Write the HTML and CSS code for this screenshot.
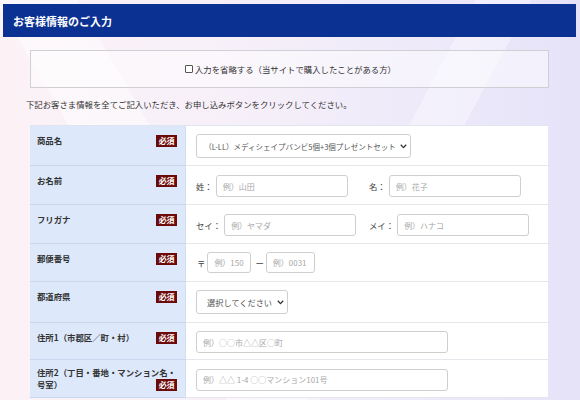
FILE: index.html
```html
<!DOCTYPE html>
<html lang="ja">
<head>
<meta charset="utf-8">
<title>お客様情報のご入力</title>
<link rel="stylesheet" href="styles.css">
</head>
<body>
<div class="page">
  <header class="head"><h1>お客様情報のご入力</h1></header>

  <div class="skip">
    <label class="skip-label"><input type="checkbox" class="check">入力を省略する（当サイトで購入したことがある方）</label>
  </div>

  <p class="intro">下記お客さま情報を全てご記入いただき、お申し込みボタンをクリックしてください。</p>

  <div class="form">
    <div class="row row-sel">
      <div class="th">商品名<span class="req">必須</span></div>
      <div class="td">
        <span class="select-wrap sel-product">
          <select class="select"><option>（L-LL）メディシェイプバンビ5個+3個プレゼントセット</option></select>
          <svg class="chev" width="7" height="5" viewBox="0 0 7 5"><path d="M0.8 0.8 L3.5 3.6 L6.2 0.8" fill="none" stroke="#333" stroke-width="1.3"/></svg>
        </span>
      </div>
    </div>

    <div class="row">
      <div class="th">お名前<span class="req">必須</span></div>
      <div class="td pair">
        <div class="grp"><span class="pre">姓：</span><input class="inp inp-name" placeholder="例）山田"></div>
        <div class="grp"><span class="pre">名：</span><input class="inp inp-name" placeholder="例）花子"></div>
      </div>
    </div>

    <div class="row">
      <div class="th">フリガナ<span class="req">必須</span></div>
      <div class="td pair">
        <div class="grp"><span class="pre">セイ：</span><input class="inp inp-name" placeholder="例）ヤマダ"></div>
        <div class="grp"><span class="pre">メイ：</span><input class="inp inp-name" placeholder="例）ハナコ"></div>
      </div>
    </div>

    <div class="row row-zip">
      <div class="th">郵便番号<span class="req">必須</span></div>
      <div class="td zip">
        <span class="pre">〒</span><input class="inp inp-zip1" placeholder="例）150"><span class="dash">ー</span><input class="inp inp-zip2" placeholder="例）0031">
      </div>
    </div>

    <div class="row row-sel2">
      <div class="th">都道府県<span class="req">必須</span></div>
      <div class="td">
        <span class="select-wrap sel-pref">
          <select class="select"><option>選択してください</option></select>
          <svg class="chev" width="7" height="5" viewBox="0 0 7 5"><path d="M0.8 0.8 L3.5 3.6 L6.2 0.8" fill="none" stroke="#333" stroke-width="1.3"/></svg>
        </span>
      </div>
    </div>

    <div class="row row-addr">
      <div class="th">住所1（市郡区／町・村）<span class="req">必須</span></div>
      <div class="td"><input class="inp inp-addr" placeholder="例）○○市△△区○町"></div>
    </div>

    <div class="row row-addr">
      <div class="th th-wrap">住所2（丁目・番地・マンション名・号室）<span class="req">必須</span></div>
      <div class="td"><input class="inp inp-addr" placeholder="例）△△ 1-4 ○○マンション101号"></div>
    </div>
  </div>
</div>
</body>
</html>
```
FILE: styles.css
```css
* { box-sizing: border-box; }
html, body { margin: 0; padding: 0; }
body {
  width: 580px;
  height: 400px;
  overflow: hidden;
  font-family: "Noto Sans CJK JP", "Noto Sans", sans-serif;
  color: #333;
  background:
    linear-gradient(118deg, transparent 0 60%, rgba(255,255,255,0.35) 60% 67%, transparent 67%),
    linear-gradient(60deg, transparent 0 28%, rgba(255,255,255,0.45) 28% 38%, transparent 38%),
    linear-gradient(90deg, #fcf2f6 0%, #f7f0f9 38%, #eeeafa 72%, #e6e3f9 100%);
}
.page {
  padding: 4px 4px 0 3px;
}
.head {
  height: 33px;
  background: #0b3192;
  display: flex;
  align-items: center;
  padding-left: 10px;
}
.head h1 {
  margin: 0;
  color: #fff;
  font-size: 11px;
  font-weight: 700;
}
.skip {
  margin: 13px 27px 0 27px;
  height: 38px;
  border: 1px solid #cfcfd4;
  background: rgba(255,255,255,0.45);
  display: flex;
  align-items: center;
  justify-content: center;
}
.skip-label {
  font-size: 8.4px;
  color: #333;
  display: flex;
  align-items: center;
  padding-left: 2px;
}
.check {
  appearance: none;
  -webkit-appearance: none;
  width: 8px;
  height: 8px;
  margin: 0 2px 0 0;
  border: 1px solid #555;
  border-radius: 1px;
  background: #fff;
}
.intro {
  margin: 10px 0 0 23px;
  font-size: 8.4px;
  line-height: 12px;
  color: #333;
}
.form {
  margin: 15px 28px 0 27px;
  border-top: 1px solid #dfe6f2;
  background: #fff;
}
.row {
  display: grid;
  grid-template-columns: 156px 1fr;
}
.th {
  background: #dde9fb;
  padding: 8px 6px 6px 7px;
  font-size: 8.4px;
  line-height: 12px;
  font-weight: 700;
  color: #333;
  border-bottom: 1px solid #c9d8ee;
  border-right: 1px solid #d3dff0;
}
.th .req { margin-right: 2px; }
.th-wrap { padding-top: 6px; }
.req {
  float: right;
  width: 21px;
  height: 12px;
  line-height: 12px;
  margin-top: 1px;
  background: #6c0a0a;
  color: #fff;
  font-size: 8px;
  font-weight: 700;
  text-align: center;
  letter-spacing: -0.3px;
}
.td {
  padding: 8px 10px 8px 10px;
  border-bottom: 1px solid #e6e6ec;
  display: flex;
  align-items: center;
  font-size: 8.4px;
  color: #333;
}
.row-sel .td { padding-bottom: 7px; }
.pair { padding-top: 9px; padding-bottom: 7px; }
.grp {
  width: 173px;
  display: flex;
  align-items: center;
}
.pre { white-space: nowrap; margin-right: 3px; color: #444; }
.inp {
  height: 22px;
  border: 1px solid #cfcfcf;
  border-radius: 3px;
  background: #fff;
  padding: 0 6px;
  font-family: inherit;
  font-size: 8px;
  color: #333;
  outline: none;
}
.inp::placeholder { color: #a8a8a8; }
.inp-name { width: 132px; }
.zip { padding-top: 8px; padding-bottom: 8px; }
.zip .pre { margin-left: 1px; margin-right: 2px; }
.inp-zip1 { width: 44px; height: 21px; }
.inp-zip2 { width: 49px; height: 21px; }
.dash { margin: 0 2px 0 4px; color: #444; }
.inp-addr { width: 252px; height: 22px; }
.row-addr .td { padding-top: 8px; padding-bottom: 6px; }
.select-wrap {
  position: relative;
  display: inline-block;
}
.select {
  appearance: none;
  -webkit-appearance: none;
  height: 24px;
  border: 1px solid #cfcfcf;
  border-radius: 3px;
  background: #fff;
  font-family: inherit;
  font-size: 8.2px;
  color: #555;
  padding: 0 12px 0 10px;
  outline: none;
}
.sel-product .select { width: 215px; padding: 0 13px 0 6px; font-size: 7.5px; text-align-last: center; }
.sel-pref .select { width: 92px; }
.row-sel2 .td { padding-top: 8px; padding-bottom: 8px; }
.chev {
  position: absolute;
  right: 4px;
  top: 10px;
  pointer-events: none;
}
```
